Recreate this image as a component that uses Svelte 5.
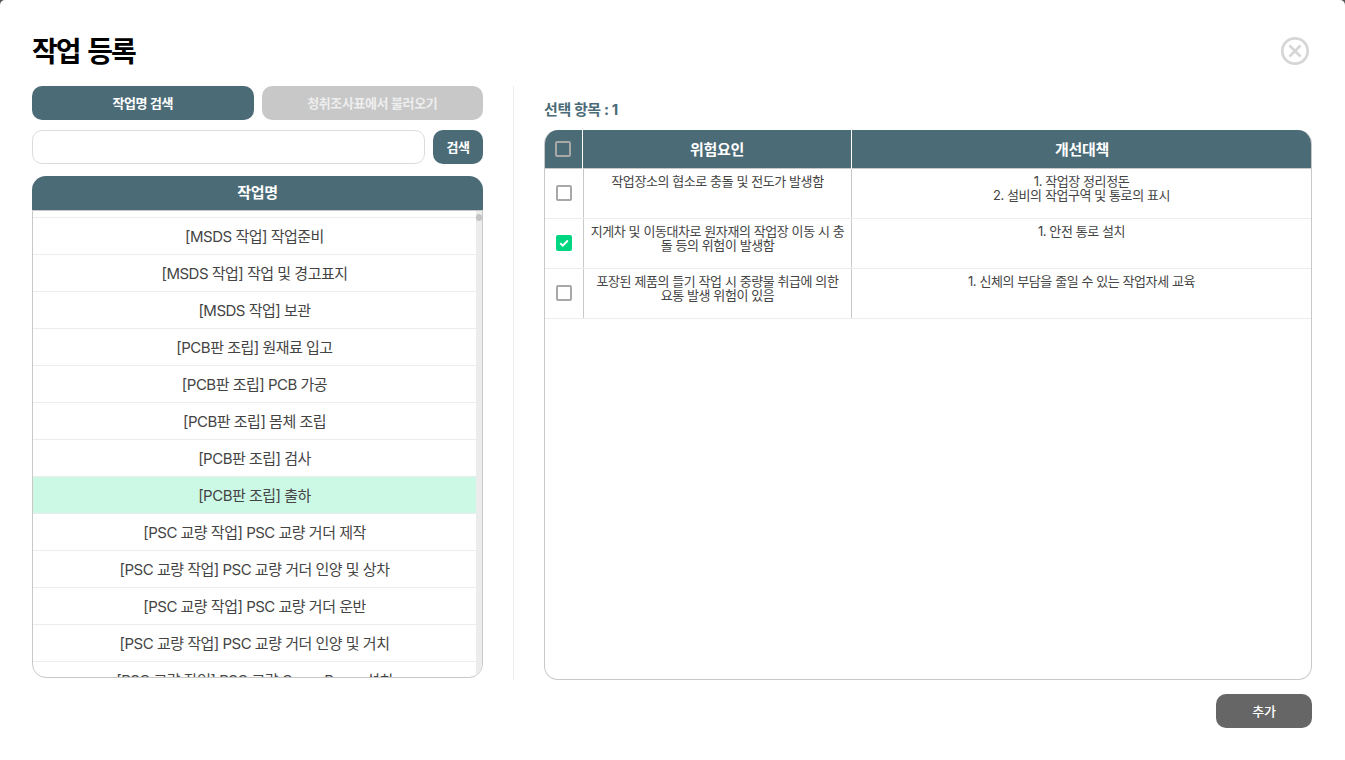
<script>
  const tasks = [
    "[MSDS 작업] 작업준비",
    "[MSDS 작업] 작업 및 경고표지",
    "[MSDS 작업] 보관",
    "[PCB판 조립] 원재료 입고",
    "[PCB판 조립] PCB 가공",
    "[PCB판 조립] 몸체 조립",
    "[PCB판 조립] 검사",
    "[PCB판 조립] 출하",
    "[PSC 교량 작업] PSC 교량 거더 제작",
    "[PSC 교량 작업] PSC 교량 거더 인양 및 상차",
    "[PSC 교량 작업] PSC 교량 거더 운반",
    "[PSC 교량 작업] PSC 교량 거더 인양 및 거치",
    "[PSC 교량 작업] PSC 교량 Cross Beam 설치",
  ];
  const selectedTask = "[PCB판 조립] 출하";

  const risks = [
    {
      risk: "작업장소의 협소로 충돌 및 전도가 발생함",
      measures: ["1. 작업장 정리정돈", "2. 설비의 작업구역 및 통로의 표시"],
      checked: false,
    },
    {
      risk: "지게차 및 이동대차로 원자재의 작업장 이동 시 충돌 등의 위험이 발생함",
      measures: ["1. 안전 통로 설치"],
      checked: true,
    },
    {
      risk: "포장된 제품의 들기 작업 시 중량물 취급에 의한 요통 발생 위험이 있음",
      measures: ["1. 신체의 부담을 줄일 수 있는 작업자세 교육"],
      checked: false,
    },
  ];
</script>

<div class="backdrop">
  <div class="modal">
    <header class="modal_header">
      <h1>작업 등록</h1>
      <button class="close" aria-label="닫기">
        <svg width="30" height="30" viewBox="0 0 30 30" fill="none" stroke="#d6d6d6" stroke-width="2.7">
          <circle cx="15" cy="15" r="12.700" />
          <path d="M9.500 9.500l11 11M20.500 9.500l-11 11" />
        </svg>
      </button>
    </header>

    <div class="columns">
      <section class="left">
        <div class="tabs">
          <button class="tab active">작업명 검색</button>
          <button class="tab">청취조사표에서 불러오기</button>
        </div>
        <div class="search">
          <input type="text" />
          <button>검색</button>
        </div>
        <div class="list_header">작업명</div>
        <div class="list">
          <ul>
            {#each tasks as task}
              <li class:selected={task === selectedTask}>{task}</li>
            {/each}
          </ul>
          <div class="scrollbar"><span></span></div>
        </div>
      </section>

      <section class="right">
        <p class="count">선택 항목 : 1</p>
        <div class="table">
          <div class="row head">
            <div class="cell check"><span class="box"></span></div>
            <div class="cell">위험요인</div>
            <div class="cell">개선대책</div>
          </div>
          {#each risks as item}
            <div class="row">
              <div class="cell check">
                <span class="box" class:on={item.checked}>
                  {#if item.checked}
                    <svg width="12" height="12" viewBox="0 0 12 12" fill="none" stroke="#fff" stroke-width="2">
                      <path d="M2.200 6.200l2.600 2.500 5-5.200" />
                    </svg>
                  {/if}
                </span>
              </div>
              <div class="cell">{item.risk}</div>
              <div class="cell">
                {#each item.measures as m}
                  <div>{m}</div>
                {/each}
              </div>
            </div>
          {/each}
        </div>
        <div class="actions">
          <button class="add">추가</button>
        </div>
      </section>
    </div>
  </div>
</div>

<style>
  :global(body) {
    margin: 0;
    background: #fff;
    font-family: Inter, "Noto Sans CJK KR", sans-serif;
  }
  .backdrop {
    width: 1345px;
    height: 760px;
    background: #555;
    overflow: hidden;
  }
  .modal {
    height: 760px;
    box-sizing: border-box;
    background: #fff;
    border-radius: 5px 5px 0 0;
    padding: 32px 33px 0 32px;
  }
  .modal_header {
    display: flex;
    justify-content: space-between;
    align-items: center;
    height: 38px;
    margin-bottom: 16px;
  }
  h1 {
    margin: 0 0 2px;
    font-size: 28px;
    font-weight: 700;
    letter-spacing: -2px;
    word-spacing: 3px;
    color: #000;
  }
  .close {
    border: none;
    background: none;
    padding: 0;
    height: 30px;
    margin-right: 2px;
  }
  button {
    font-family: inherit;
  }
  .columns {
    display: flex;
  }
  .left {
    width: 451px;
    padding-right: 30px;
    border-right: 1px solid #ececec;
    height: 594px;
  }
  .tabs {
    display: flex;
    gap: 8px;
  }
  .tab {
    flex: 1;
    height: 34px;
    padding: 0 0 2px;
    border: none;
    border-radius: 10px;
    background: #c8c8c8;
    color: #eee;
    font-size: 13px;
    font-weight: 600;
    letter-spacing: -0.4px;
  }
  .tab.active {
    background: #4b6b77;
    color: #fff;
  }
  .search {
    display: flex;
    gap: 8px;
    margin-top: 10px;
  }
  .search input {
    flex: 1;
    min-width: 0;
    height: 34px;
    box-sizing: border-box;
    border: 1px solid #dcdcdc;
    border-radius: 10px;
  }
  .search button {
    width: 50px;
    height: 34px;
    padding: 0 0 2px;
    border: none;
    border-radius: 10px;
    background: #4b6b77;
    color: #fff;
    font-size: 13px;
    font-weight: 600;
    letter-spacing: -0.4px;
  }
  .list_header {
    margin-top: 12px;
    height: 34px;
    line-height: 33px;
    border-radius: 14px 14px 0 0;
    background: #4b6b77;
    color: #fff;
    text-align: center;
    font-size: 15px;
    font-weight: 600;
    letter-spacing: -0.3px;
  }
  .list {
    display: flex;
    height: 468px;
    box-sizing: border-box;
    border: 1px solid #c8c8c8;
    border-radius: 0 0 14px 14px;
    overflow: hidden;
  }
  ul {
    flex: 1;
    margin: 0;
    padding: 6px 0 0;
    list-style: none;
    min-width: 0;
  }
  li {
    height: 37px;
    box-sizing: border-box;
    border-top: 1px solid #ececec;
    text-align: center;
    line-height: 38px;
    font-size: 15px;
    letter-spacing: -0.5px;
    color: #444;
  }
  li.selected {
    background: #ccf9e6;
  }
  .scrollbar {
    width: 6px;
    background: #ececec;
    padding-top: 3px;
  }
  .scrollbar span {
    display: block;
    height: 7px;
    border-radius: 3px;
    background: #c4c4c4;
  }
  .right {
    flex: 1;
    padding-left: 30px;
  }
  .count {
    margin: 15px 0 0;
    height: 18px;
    line-height: 18px;
    font-size: 15px;
    font-weight: 700;
    letter-spacing: -0.4px;
    color: #4b6b77;
  }
  .table {
    margin-top: 11px;
    height: 550px;
    box-sizing: border-box;
    border: 1px solid #c8c8c8;
    border-top: none;
    border-radius: 14px;
    overflow: hidden;
  }
  .row {
    display: grid;
    grid-template-columns: 38px 268px 1fr;
    height: 50px;
    border-bottom: 1px solid #ececec;
    box-sizing: border-box;
    font-size: 13px;
    line-height: 14px;
    letter-spacing: -0.42px;
    color: #444;
    text-align: center;
  }
  .row .cell {
    padding: 5px 6px 0;
    border-left: 1px solid #c8c8c8;
    word-break: break-all;
  }
  .row .cell.check {
    padding: 0 0 2px;
    border-left: none;
    display: flex;
    align-items: center;
    justify-content: center;
  }
  .row.head {
    grid-template-columns: 38px 269px 1fr;
    height: 39px;
    margin: 0 -1px;
    background: #4b6b77;
    color: #fff;
    border-bottom: 1px solid #c8c8c8;
    font-size: 15px;
    font-weight: 600;
    line-height: 40px;
    letter-spacing: -0.3px;
  }
  .row.head .cell {
    padding: 0;
    border-left: 1px solid #fff;
  }
  .row.head .cell.check {
    padding: 0 0 2px;
    border-left: none;
  }
  .box {
    display: flex;
    align-items: center;
    justify-content: center;
    width: 16px;
    height: 16px;
    box-sizing: border-box;
    border: 2px solid #a8a8a8;
    border-radius: 2px;
    background: transparent;
  }
  .box.on {
    border: none;
    background: #00d67f;
  }
  .actions {
    display: flex;
    justify-content: flex-end;
    margin-top: 14px;
  }
  .add {
    width: 96px;
    height: 34px;
    padding: 0 0 2px;
    border: none;
    border-radius: 10px;
    background: #666;
    color: #fff;
    font-size: 13px;
    font-weight: 500;
    letter-spacing: -0.3px;
  }
</style>
